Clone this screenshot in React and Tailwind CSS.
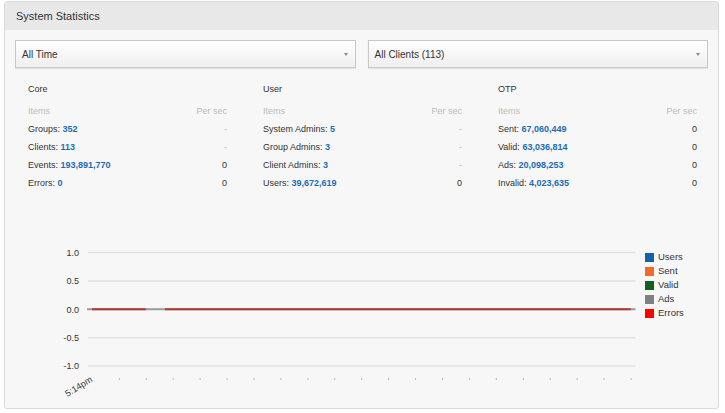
import React from "react";

const font = { fontFamily: '"Liberation Sans", Arial, sans-serif' };

function Select({ label }) {
  return (
    <div className="flex-1 h-[28px] border border-[#c8c8c8] bg-gradient-to-b from-white to-[#efefef] shadow-[0_1px_1px_rgba(0,0,0,0.08)] flex items-center justify-between pl-[6px] pr-[7px]">
      <span className="text-[10px] text-[#333]">{label}</span>
      <span className="w-0 h-0 border-x-[2.5px] border-x-transparent border-t-[3px] border-t-[#888]" />
    </div>
  );
}

function Col({ title, rows }) {
  return (
    <div>
      <div className="h-[18px] leading-[18px] text-[#333]">{title}</div>
      <div className="mt-[5px] h-[17px] leading-[17px] flex justify-between text-[#bbb]">
        <span>Items</span>
        <span>Per sec</span>
      </div>
      {rows.map(([k, v, r]) => (
        <div key={k} className="h-[18px] leading-[18px] flex justify-between">
          <span className="text-[#333]">
            {k} <span className="font-bold text-[#1d6cb3]">{v}</span>
          </span>
          <span className={r === "-" ? "text-[#bbb]" : "text-[#333]"}>{r}</span>
        </div>
      ))}
    </div>
  );
}

function Chart() {
  const grid = [
    [12.5, "1.0"],
    [41, "0.5"],
    [69.3, "0.0"],
    [97.7, "-0.5"],
    [126, "-1.0"],
  ];
  const ticks = [];
  for (let i = 1; i <= 20; i++) ticks.push(77.4 + i * 26.93);
  return (
    <svg width="630" height="162" className="block" style={font}>
      {grid.map(([y, l]) => (
        <g key={l}>
          <line x1="73" x2="620.5" y1={y} y2={y} stroke="#e2e2e2" strokeWidth="1.5" />
          <text x="64" y={y + 3.3} fontSize="9" fill="#333" textAnchor="end">
            {l}
          </text>
        </g>
      ))}
      <line x1="72" x2="620.5" y1="69.3" y2="69.3" stroke="#9a9a9a" strokeWidth="2" />
      <line x1="77" x2="130.7" y1="69.3" y2="69.3" stroke="#b03a35" strokeWidth="2" />
      <line x1="150" x2="615.7" y1="69.3" y2="69.3" stroke="#b03a35" strokeWidth="2" />
      {ticks.map((x) => (
        <rect key={x} x={x - 0.5} y="138.5" width="1" height="1" fill="#777" />
      ))}
      <text
        x="78"
        y="141"
        fontSize="9"
        fill="#333"
        textAnchor="end"
        transform="rotate(-32 78 141)"
      >
        5:14pm
      </text>
    </svg>
  );
}

const legend = [
  ["Users", "#1660a8"],
  ["Sent", "#f26a25"],
  ["Valid", "#145f1c"],
  ["Ads", "#808080"],
  ["Errors", "#ff0000"],
];

export default function App() {
  return (
    <div className="w-[725px] h-[413px] bg-white pt-[1px] pl-[4px]" style={font}>
      <div className="w-[715px] border border-[#dadada] rounded-[3px] bg-[#f7f7f7] overflow-hidden">
        <div className="h-[28px] bg-[#e8e8e8] pl-[11px] flex items-center text-[11px] text-[#333]">
          System Statistics
        </div>
        <div className="px-[10px] pt-[10px] pb-[6px]">
          <div className="flex gap-[12px]">
            <Select label="All Time" />
            <Select label="All Clients (113)" />
          </div>
          <div className="mt-[12px] ml-[13px] grid grid-cols-[199px_199px_199px] gap-x-[36px] text-[9px]">
            <Col
              title="Core"
              rows={[
                ["Groups:", "352", "-"],
                ["Clients:", "113", "-"],
                ["Events:", "193,891,770", "0"],
                ["Errors:", "0", "0"],
              ]}
            />
            <Col
              title="User"
              rows={[
                ["System Admins:", "5", "-"],
                ["Group Admins:", "3", "-"],
                ["Client Admins:", "3", "-"],
                ["Users:", "39,672,619", "0"],
              ]}
            />
            <Col
              title="OTP"
              rows={[
                ["Sent:", "67,060,449", "0"],
                ["Valid:", "63,036,814", "0"],
                ["Ads:", "20,098,253", "0"],
                ["Invalid:", "4,023,635", "0"],
              ]}
            />
          </div>
          <div className="mt-[48px] flex">
            <Chart />
            <div className="pt-[10px]">
              {legend.map(([l, c]) => (
                <div key={l} className="h-[14px] flex items-center gap-[4px] text-[9.5px] text-[#333]">
                  <span className="w-[9px] h-[9px]" style={{ background: c }} />
                  <span>{l}</span>
                </div>
              ))}
            </div>
          </div>
        </div>
      </div>
    </div>
  );
}
